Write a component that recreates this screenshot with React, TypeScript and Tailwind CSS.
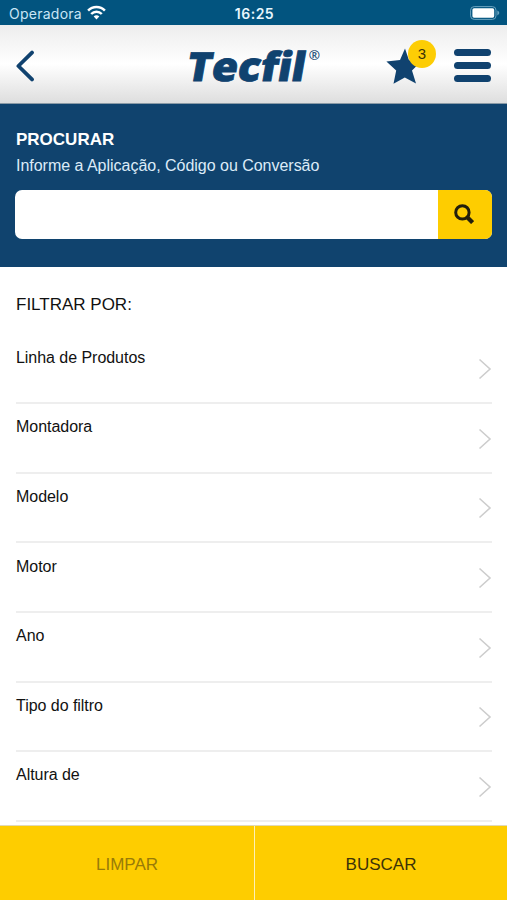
import { useState } from 'react';

const filters = ['Linha de Produtos', 'Montadora', 'Modelo', 'Motor', 'Ano', 'Tipo do filtro', 'Altura de'];

function StatusBar() {
  return (
    <div className="grid h-[25px] shrink-0 grid-cols-3 items-center bg-[#02547f] pt-[2px] pr-[7px] pl-[9px] font-['Inter',sans-serif] text-white">
      <div className="flex items-center gap-[6px]">
        <span className="text-[14px] leading-none tracking-[0.25px] text-[#c9e6f6]">Operadora</span>
        <svg width="19" height="15" viewBox="0 0 19 15" fill="none" stroke="#fff" strokeWidth="2.5" className="-mt-[2px] -ml-px">
          <path d="M1.1 5.6a11.7 11.7 0 0 1 16.8 0" />
          <path d="M4.2 9a7.4 7.4 0 0 1 10.6 0" />
          <path d="M6.7 11.4a3.9 3.9 0 0 1 5.6 0L9.5 14.4z" fill="#fff" stroke="none" />
        </svg>
      </div>
      <span className="text-center text-[14px] leading-none font-semibold tracking-[0.5px] text-[#e8f6fd]">16:25</span>
      <svg width="31" height="14" viewBox="0 0 31 14" className="-mt-[2px] justify-self-end">
        <rect x="1.6" y="0.6" width="25.4" height="12.8" rx="3.6" fill="none" stroke="#6ba3bf" strokeWidth="1" />
        <rect x="3.4" y="2.3" width="21.8" height="9.4" rx="1.6" fill="#fff" />
        <path d="M28.3 4.6c2.6 1 2.6 3.8 0 4.8z" fill="#6ba3bf" />
      </svg>
    </div>
  );
}

function Header() {
  return (
    <header className="flex h-[79px] shrink-0 items-center justify-between border-b border-[#8a9aa6] bg-linear-to-b from-[#ededed] via-white via-50% to-[#dedede] pt-[3px] pr-[16px] pl-[15px]">
      <button type="button" aria-label="Voltar" className="w-[105px]">
        <svg width="20" height="32" viewBox="0 0 20 32" fill="none" stroke="#10426f" strokeWidth="3.8" strokeLinecap="round" strokeLinejoin="round">
          <path d="M17 2.6 3.4 16l13.6 13.4" />
        </svg>
      </button>
      <svg width="156" height="70" viewBox="0 0 156 70" className="mr-auto ml-[56px]" fill="#10426f">
        <text
          x="9"
          y="0"
          textLength="118.5"
          lengthAdjust="spacingAndGlyphs"
          transform="translate(0 49.6) skewX(-10)"
          stroke="#10426f"
          strokeWidth="0.8"
          className="font-['Open_Sans',sans-serif] text-[40px] font-extrabold"
        >
          Tecfil
        </text>
        <text x="132.7" y="29.3" stroke="#10426f" strokeWidth="0.1" className="font-['Open_Sans',sans-serif] text-[13.5px]">
          ®
        </text>
      </svg>
      <div className="relative">
        <svg width="35" height="36" viewBox="0 0 35 36" fill="#10426f">
          <path d="M19 0.5 23 12.2l12 1.4-9 8.9 4 13.1-11.2-6.2-11.3 6.4 2.7-13.3L0.4 13.4 14 12.1z" />
        </svg>
        <span className="absolute -top-[8px] left-[22px] flex size-[28px] items-center justify-center rounded-full bg-[#fdcd05] pt-[2px] font-['Liberation_Sans',Arial,sans-serif] text-[15px] text-[#3b3208]">
          3
        </span>
      </div>
      <button type="button" aria-label="Menu" className="ml-[33px] flex w-[37px] flex-col gap-[6px]">
        <span className="h-[7px] rounded-full bg-[#10426f]" />
        <span className="h-[7px] rounded-full bg-[#10426f]" />
        <span className="h-[7px] rounded-full bg-[#10426f]" />
      </button>
    </header>
  );
}

function SearchPanel() {
  const [term, setTerm] = useState('');

  return (
    <section className="h-[163px] shrink-0 bg-[#10436e] px-[15px] pt-[26px] text-white">
      <h1 className="pl-px text-[17px] leading-[20px] font-bold">PROCURAR</h1>
      <p className="mt-[6px] pl-px text-[16px] leading-[20px] tracking-[-0.02px] text-[#dcebf8]">Informe a Aplicação, Código ou Conversão</p>
      <div className="mt-[14px] flex h-[49px] overflow-hidden rounded-[7px] bg-white">
        <input
          value={term}
          onChange={(e) => setTerm(e.target.value)}
          aria-label="Procurar"
          className="min-w-0 flex-1 px-3 text-base text-black outline-none"
        />
        <button type="button" aria-label="Buscar" className="flex w-[54px] items-center justify-center bg-[#fecd00]">
          <svg width="20" height="20" viewBox="0 0 20 20" fill="none" stroke="#231f0c" className="-mt-px -ml-[2px]">
            <circle cx="8.4" cy="8.4" r="6.7" strokeWidth="3" />
            <path d="m13 13 5.6 5.6" strokeWidth="4.2" />
          </svg>
        </button>
      </div>
    </section>
  );
}

export default function App() {
  return (
    <div className="flex h-[900px] w-full flex-col overflow-hidden bg-white font-['Liberation_Sans',Arial,sans-serif] text-[#111]">
      <StatusBar />
      <Header />
      <SearchPanel />

      <main className="min-h-0 flex-1 overflow-hidden pr-[15px] pl-[16px]">
        <h2 className="pt-[28px] text-[17px] leading-[20px]">FILTRAR POR:</h2>
        <ul className="mt-[19.7px]">
          {filters.map((label) => (
            <li key={label} className="flex h-[69.6px] justify-between border-b-2 border-[#eee]">
              <span className="pt-[13.2px] text-[16px] leading-[20px] tracking-[-0.04px]">{label}</span>
              <svg width="14" height="22" viewBox="0 0 14 22" fill="none" stroke="#cdcdcd" strokeWidth="1.6" className="mt-[23.5px]">
                <path d="m1.5 1.5 10.5 9.5-10.5 9.5" />
              </svg>
            </li>
          ))}
        </ul>
      </main>

      <footer className="flex h-[75px] shrink-0 border-t border-[#e0d9b8] bg-[#fecd00] text-[17px]">
        <button type="button" className="w-[255px] border-r border-[#fdf0b5] pt-[3px] text-[#987b08]">
          LIMPAR
        </button>
        <button type="button" className="flex-1 pt-[3px] text-[#3b3208]">
          BUSCAR
        </button>
      </footer>
    </div>
  );
}
